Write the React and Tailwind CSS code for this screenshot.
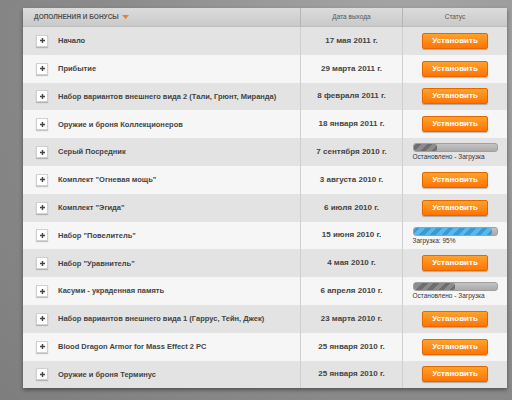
import React from 'react'

const rows = [
  { name: 'Начало', date: '17 мая 2011 г.', status: 'install' },
  { name: 'Прибытие', date: '29 марта 2011 г.', status: 'install' },
  { name: 'Набор вариантов внешнего вида 2 (Тали, Грюнт, Миранда)', date: '8 февраля 2011 г.', status: 'install' },
  { name: 'Оружие и броня Коллекционеров', date: '18 января 2011 г.', status: 'install' },
  { name: 'Серый Посредник', date: '7 сентября 2010 г.', status: 'stopped', pct: 28 },
  { name: 'Комплект "Огневая мощь"', date: '3 августа 2010 г.', status: 'install' },
  { name: 'Комплект "Эгида"', date: '6 июля 2010 г.', status: 'install' },
  { name: 'Набор "Повелитель"', date: '15 июня 2010 г.', status: 'loading', pct: 95 },
  { name: 'Набор "Уравнитель"', date: '4 мая 2010 г.', status: 'install' },
  { name: 'Касуми - украденная память', date: '6 апреля 2010 г.', status: 'stopped', pct: 50 },
  { name: 'Набор вариантов внешнего вида 1 (Гаррус, Тейн, Джек)', date: '23 марта 2010 г.', status: 'install' },
  { name: 'Blood Dragon Armor for Mass Effect 2 PC', date: '25 января 2010 г.', status: 'install' },
  { name: 'Оружие и броня Терминус', date: '25 января 2010 г.', status: 'install' },
]

function InstallButton() {
  return (
    <button className="w-[66px] h-[16px] rounded-[2px] bg-gradient-to-b from-[#ffa12a] to-[#ff7400] border border-[#e06a00] text-white text-[8px] font-bold shadow-[0_1px_1px_rgba(0,0,0,0.25)] leading-none">
      Установить
    </button>
  )
}

function Progress({ pct, blue, label }) {
  const fill = blue
    ? 'repeating-linear-gradient(-45deg, #3a9ad6 0 4px, #5ab8ea 4px 8px)'
    : 'repeating-linear-gradient(-45deg, #6e6e6e 0 4px, #8c8c8c 4px 8px)'
  return (
    <div className="w-[85px] flex flex-col items-start">
      <div className="w-full h-[9px] rounded-[3px] bg-gradient-to-b from-[#c4c4c4] to-[#aaaaaa] overflow-hidden border border-[#a0a0a0]">
        <div className="h-full rounded-[2px]" style={{ width: `${pct}%`, background: fill }} />
      </div>
      <div className="text-[6.5px] text-[#333] mt-[2px] leading-none">{label}</div>
    </div>
  )
}

export default function App() {
  return (
    <div
      className="w-[512px] h-[400px] overflow-hidden pt-[8px] pl-[23px]"
      style={{ fontFamily: '"Liberation Sans", Arial, sans-serif', background: 'radial-gradient(circle at 80% 15%, #a8a8a8, #8c8c8c 55%, #7e7e7e)' }}
    >
      <div className="w-[484px] bg-white shadow-[0_2px_4px_rgba(0,0,0,0.4)]">
        <div className="flex h-[19px] bg-gradient-to-b from-[#dcdcdc] to-[#c9c9c9] text-[#555] text-[6.5px] border-b border-[#bdbdbd]">
          <div className="w-[277px] flex items-center pl-[11px] font-bold">
            ДОПОЛНЕНИЯ И БОНУСЫ
            <svg width="7" height="5" viewBox="0 0 7 5" className="ml-[3px]">
              <path d="M0 0 L7 0 L3.5 4 Z" fill="#f57d20" />
            </svg>
          </div>
          <div className="w-[102px] border-l border-[#b5b5b5] flex items-center justify-center">Дата выхода</div>
          <div className="flex-1 border-l border-[#b5b5b5] flex items-center justify-center">Статус</div>
        </div>
        {rows.map((r, i) => (
          <div
            key={i}
            className={`flex h-[27.8px] ${i % 2 === 0 ? 'bg-[#e3e3e3]' : 'bg-[#f6f6f6]'}`}
          >
            <div className="w-[277px] flex items-center pl-[13px]">
              <div className="w-[12px] h-[12px] bg-white border border-[#d0d0d0] shadow-[0_1px_1px_rgba(0,0,0,0.2)] flex items-center justify-center">
                <svg width="7" height="7" viewBox="0 0 7 7">
                  <path d="M3.5 1 V6 M1 3.5 H6" stroke="#444" strokeWidth="1.4" />
                </svg>
              </div>
              <span className="ml-[10px] text-[7.5px] font-bold text-[#444] whitespace-nowrap">{r.name}</span>
            </div>
            <div className="w-[102px] border-l border-[#cfcfcf] flex items-center justify-center text-[8px] font-bold text-[#444]">
              {r.date}
            </div>
            <div className="flex-1 border-l border-[#cfcfcf] flex items-center justify-center">
              {r.status === 'install' && <InstallButton />}
              {r.status === 'stopped' && <Progress pct={r.pct} label="Остановлено - Загрузка" />}
              {r.status === 'loading' && <Progress pct={r.pct} blue label="Загрузка: 95%" />}
            </div>
          </div>
        ))}
      </div>
    </div>
  )
}
